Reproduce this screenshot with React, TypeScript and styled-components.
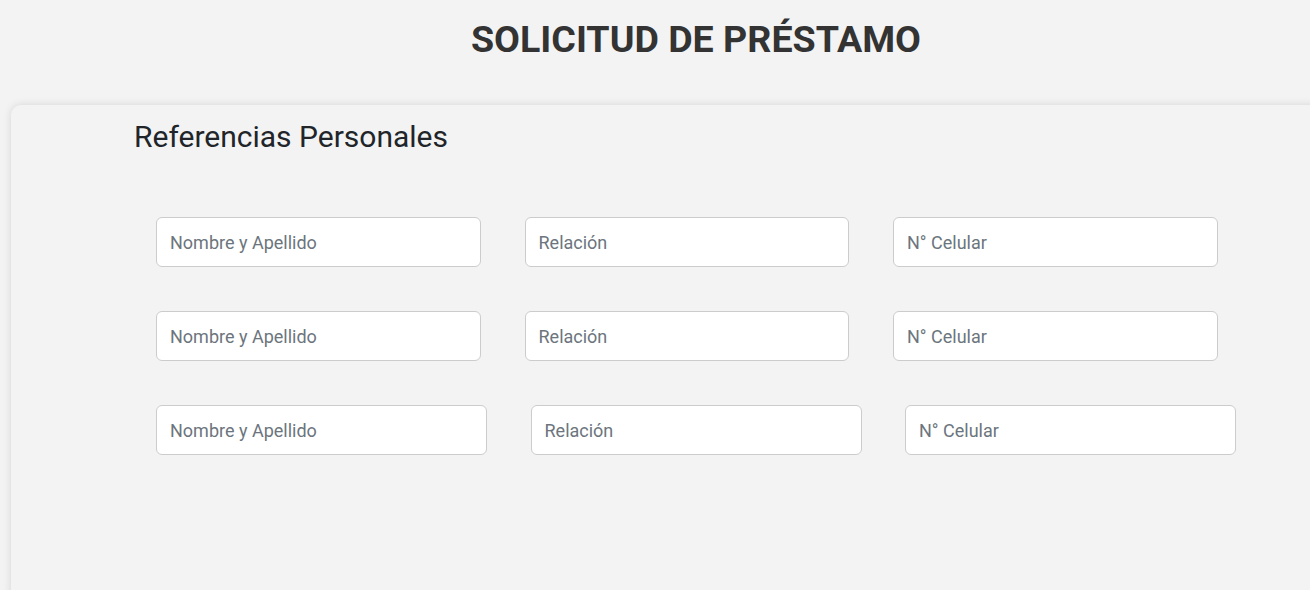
import styled, { createGlobalStyle } from "styled-components";

const GlobalStyle = createGlobalStyle`
  html, body {
    margin: 0;
    padding: 0;
    background: #f3f3f3;
    overflow: hidden;
  }
  body {
    font-family: Roboto, "Liberation Sans", sans-serif;
  }
`;

const Page = styled.div`
  width: 1310px;
  height: 590px;
  overflow: hidden;
`;

const Title = styled.h1`
  margin: 0;
  padding: 17px 0 0 82px;
  height: 88px;
  box-sizing: border-box;
  text-align: center;
  font-size: 37.6px;
  font-weight: 700;
  color: #333333;
  line-height: 44px;
`;

const Card = styled.section`
  margin-left: 11px;
  width: 1340px;
  height: 520px;
  margin-top: 17px;
  background: #f3f3f3;
  border-radius: 10px;
  box-shadow: 0 0 8px rgba(0, 0, 0, 0.12);
  padding: 14px 0 0 123px;
  box-sizing: border-box;
`;

const Heading = styled.h2`
  margin: 0 0 62px;
  font-size: 30px;
  font-weight: 400;
  line-height: 36px;
  color: #212529;
`;

const Rows = styled.div`
  display: flex;
  flex-direction: column;
  gap: 44px;
  padding-left: 22px;
`;

const Row = styled.div<{ $wide?: boolean }>`
  display: grid;
  grid-template-columns: repeat(3, ${(p) => (p.$wide ? "331px" : "324.5px")});
  column-gap: ${(p) => (p.$wide ? "43.5px" : "44px")};
`;

const Field = styled.input`
  height: 50px;
  box-sizing: border-box;
  border: 1px solid #cccccc;
  border-radius: 6px;
  background: #ffffff;
  padding: 0 13px;
  font-family: Roboto, "Liberation Sans", sans-serif;
  font-size: 18px;
  color: #495057;
  outline: none;

  &::placeholder {
    color: #6c757d;
  }
`;

const rows = [false, false, true];

function App() {
  return (
    <Page>
      <GlobalStyle />
      <Title>SOLICITUD DE PRÉSTAMO</Title>
      <Card>
        <Heading>Referencias Personales</Heading>
        <Rows>
          {rows.map((wide, i) => (
            <Row key={i} $wide={wide}>
              <Field placeholder="Nombre y Apellido" />
              <Field placeholder="Relación" />
              <Field placeholder="N° Celular" />
            </Row>
          ))}
        </Rows>
      </Card>
    </Page>
  );
}

export default App;
